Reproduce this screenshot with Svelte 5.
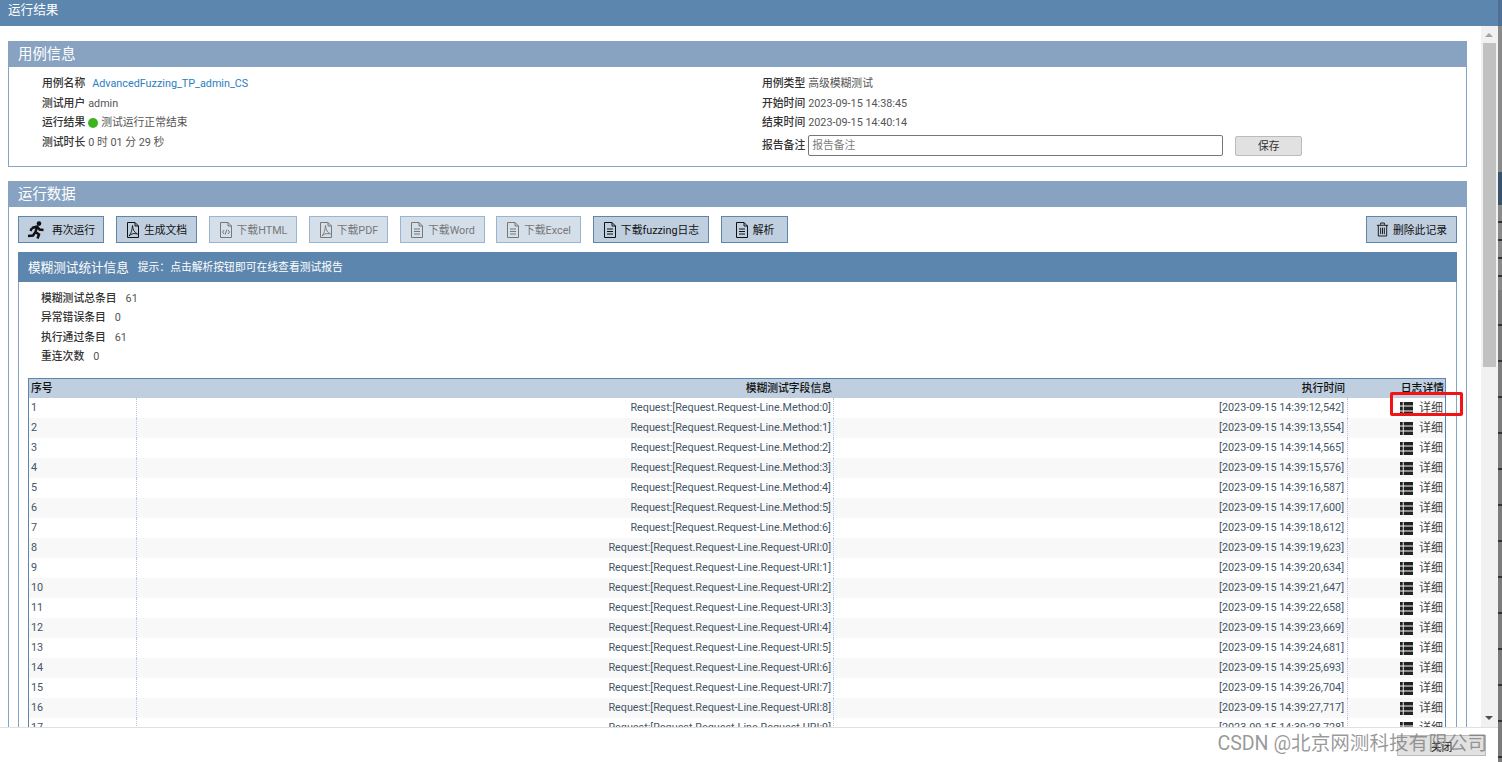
<script>
  const caseName = 'AdvancedFuzzing_TP_admin_CS';
  const times = ['12,542', '13,554', '14,565', '15,576', '16,587', '17,600', '18,612', '19,623', '20,634', '21,647', '22,658', '23,669', '24,681', '25,693', '26,704', '27,717', '28,728'];
  const rows = times.map((t, i) => ({
    no: i + 1,
    field: i < 7 ? `Request:[Request.Request-Line.Method:${i}]` : `Request:[Request.Request-Line.Request-URI:${i - 7}]`,
    time: `[2023-09-15 14:39:${t}]`
  }));

  const buttons = [
    { label: '再次运行', icon: 'run', width: 86 },
    { label: '生成文档', icon: 'pdf', width: 81 },
    { label: '下载HTML', icon: 'code', width: 88, off: true },
    { label: '下载PDF', icon: 'pdf', width: 79, off: true },
    { label: '下载Word', icon: 'doc', width: 85, off: true, tight: true },
    { label: '下载Excel', icon: 'doc', width: 85, off: true },
    { label: '下载fuzzing日志', icon: 'doc', width: 116 },
    { label: '解析', icon: 'doc', width: 67 }
  ];

  const stats = [
    ['模糊测试总条目', '61'],
    ['异常错误条目', '0'],
    ['执行通过条目', '61'],
    ['重连次数', '0']
  ];
</script>

{#snippet icon(kind)}
  {#if kind === 'run'}
    <svg class="ico run" viewBox="0 0 18 18" width="18" height="18">
      <circle cx="12" cy="2.600" r="2.300" fill="#111" />
      <path d="M5 7 L10 5.500 L12.500 8.500 L16.500 9 M10 5.500 L8.500 11 L12 13.500 L10.500 17.500 M8.500 11 L6 14.500 L1 15 M5 7 L3.500 10" fill="none" stroke="#111" stroke-width="2.500" />
    </svg>
  {:else}
    <svg class="ico" viewBox="0 0 14 16" width="14" height="16">
      <path d="M1.500 .5 H9 L12.500 4 V15.500 H1.500 Z M9 .5 V4 H12.500" fill="none" stroke="currentColor" />
      {#if kind === 'doc'}
        <path d="M4 7 H10 M4 9.500 H10 M4 12 H10" stroke="currentColor" />
      {:else if kind === 'pdf'}
        <path d="M6.500 3.500 C7 8 8 10 11.500 12 C8 11 5.500 11.500 3 14 C5.500 11 6 8 6.500 3.500 Z" fill="none" stroke="currentColor" stroke-width=".9" />
      {:else}
        <path d="M5 8 L3.500 10 L5 12 M9 8 L10.500 10 L9 12 M7.800 7.500 L6.200 12.500" fill="none" stroke="currentColor" />
      {/if}
    </svg>
  {/if}
{/snippet}

<div class="page">
  <div class="dialog">
    <div class="title">运行结果</div>

    <div class="middle">
      <div class="scroll">
        <section class="panel info">
          <h3>用例信息</h3>
          <div class="info-body">
            <div class="info-col left">
              <div><b>用例名称</b> <a href="#case" class="case">{caseName}</a></div>
              <div><b>测试用户</b> admin</div>
              <div class="result"><b>运行结果</b> <i class="dot"></i> 测试运行正常结束</div>
              <div><b>测试时长</b> 0 时 01 分 29 秒</div>
            </div>
            <div class="info-col right">
              <div><b>用例类型</b> 高级模糊测试</div>
              <div><b>开始时间</b> 2023-09-15 14:38:45</div>
              <div><b>结束时间</b> 2023-09-15 14:40:14</div>
              <div class="note">
                <b>报告备注</b>
                <input placeholder="报告备注" />
                <button class="save">保存</button>
              </div>
            </div>
          </div>
        </section>

        <section class="panel data">
          <h3>运行数据</h3>
          <div class="data-body">
            <div class="toolbar">
              {#each buttons as b}
                <button class="tool" class:off={b.off} class:tight={b.tight} style="width:{b.width}px">
                  {@render icon(b.icon)}
                  <span>{b.label}</span>
                </button>
              {/each}
              <button class="tool del">
                <svg class="ico" viewBox="0 0 14 16" width="13" height="15">
                  <path d="M1 3.500 H13 M5 3 V1 H9 V3 M2.500 3.500 V15 H11.500 V3.500 M5 6 V13 M7 6 V13 M9 6 V13" fill="none" stroke="currentColor" />
                </svg>
                <span>删除此记录</span>
              </button>
            </div>

            <div class="fuzz">
              <div class="fuzz-head">
                <strong>模糊测试统计信息</strong>
                <span>提示：点击解析按钮即可在线查看测试报告</span>
              </div>
              <div class="stats">
                {#each stats as s}
                  <div><b>{s[0]}</b><em>{s[1]}</em></div>
                {/each}
              </div>
              <div class="table">
                <div class="row head">
                  <div class="c1">序号</div>
                  <div class="c2">模糊测试字段信息</div>
                  <div class="c3">执行时间</div>
                  <div class="c4">日志详情</div>
                </div>
                {#each rows as r}
                  <div class="row">
                    <div class="c1">{r.no}</div>
                    <div class="c2">{r.field}</div>
                    <div class="c3">{r.time}</div>
                    <div class="c4">
                      <svg viewBox="0 0 14 13" width="13" height="13" preserveAspectRatio="none" fill="#222">
                        <path d="M0 0 H3 V3.500 H0 Z M4 0 H14 V3.500 H4 Z M0 4.500 H3 V8.500 H0 Z M4 4.500 H14 V8.500 H4 Z M0 9.500 H3 V13 H0 Z M4 9.500 H14 V13 H4 Z" />
                      </svg>
                      <span>详细</span>
                    </div>
                  </div>
                {/each}
              </div>
            </div>
          </div>
        </section>
      </div>

      <div class="scrollbar">
        <span class="up"></span>
        <div class="thumb"></div>
        <span class="down"></span>
      </div>
    </div>

    <div class="bottom">
      <button class="close">关闭</button>
    </div>
  </div>

  <div class="sliver">
    <div class="s0"></div>
    <div class="s1"></div>
    <div class="s2"></div>
    <div class="s3"></div>
    <div class="s4"></div>
  </div>

  <div class="redbox"></div>
  <div class="mark">CSDN @北京网测科技有限公司</div>
</div>

<style>
  :global(body) {
    margin: 0;
    background: #fff;
  }

  .page {
    position: relative;
    display: flex;
    width: 1502px;
    height: 762px;
    overflow: hidden;
    font-family: Roboto, "Noto Sans CJK SC", sans-serif;
    font-size: 10.8px;
    color: #555;
  }

  .dialog {
    display: flex;
    flex-direction: column;
    width: 1498px;
    height: 762px;
  }

  .title {
    flex: none;
    height: 26px;
    padding: 0 8px;
    background: #5d86ae;
    color: #fff;
    font-size: 12.6px;
    line-height: 19px;
  }

  .middle {
    display: flex;
    flex: none;
    height: 701px;
    overflow: hidden;
  }

  .scroll {
    box-sizing: border-box;
    width: 1481px;
    padding: 15px 14px 0 8px;
    overflow: hidden;
  }

  .panel {
    border: 1px solid #84a5c6;
    border-top: 0;
  }

  .panel h3 {
    margin: 0 -1px;
    height: 26px;
    padding-left: 10px;
    background: #87a3c1;
    color: #fff;
    font-size: 14.4px;
    font-weight: 400;
    line-height: 28px;
  }

  .info {
    height: 126px;
    box-sizing: border-box;
    margin-bottom: 14px;
  }

  .info-body {
    display: flex;
    padding: 7px 0 0 33px;
  }

  .info-col > div {
    display: flex;
    align-items: baseline;
    gap: 3px;
    height: 19.5px;
    line-height: 19.5px;
  }

  .left {
    width: 720px;
  }

  .info b,
  .stats b {
    font-weight: 500;
    color: #333;
  }

  .case {
    margin-left: 4px;
    color: #2a7ec2;
    text-decoration: none;
  }

  .info-col .result {
    align-items: center;
  }

  .dot {
    width: 10px;
    height: 10px;
    border-radius: 50%;
    background: #3cb41e;
  }

  .info-col .note {
    align-items: center;
    height: 24px;
    margin-top: 1px;
  }

  .note input {
    box-sizing: border-box;
    width: 415px;
    height: 21px;
    padding: 0 3px;
    border: 1px solid #767676;
    border-radius: 2px;
    font: inherit;
  }

  .note input::placeholder {
    color: #808080;
  }

  .save {
    width: 67px;
    height: 20px;
    margin-left: 9px;
    padding: 0;
    border: 1px solid #bbb;
    border-radius: 2px;
    background: #e1e1e1;
    color: #333;
    font: inherit;
  }

  .data-body {
    padding: 9px 9px 0;
  }

  .toolbar {
    display: flex;
    gap: 12px;
    height: 27px;
    margin-bottom: 9px;
  }

  .tool {
    display: flex;
    align-items: center;
    justify-content: center;
    gap: 4px;
    box-sizing: border-box;
    height: 27px;
    padding: 0 0 2px;
    border: 1px solid #5d86ae;
    background: #bfcfe0;
    color: #111;
    font: inherit;
  }

  .tool.off {
    border-color: #9ab5d2;
    background: #d5dfea;
    color: #777;
  }

  .tool.tight {
    margin-right: -1px;
  }

  .tool .run {
    margin-right: 3px;
  }

  .tool .ico {
    margin-top: 2px;
  }

  .del {
    width: 91px;
    margin-left: auto;
  }

  .fuzz {
    border: 1px solid #84a5c6;
    border-top: 0;
  }

  .fuzz-head {
    display: flex;
    align-items: center;
    gap: 9px;
    box-sizing: border-box;
    height: 30px;
    margin: 0 -1px;
    padding: 0 0 2px 10px;
    background: #5d86ae;
    color: #fff;
  }

  .fuzz-head strong {
    font-size: 12.6px;
    font-weight: 400;
  }

  .stats {
    padding: 6.5px 0 0 22px;
    height: 90px;
    box-sizing: border-box;
  }

  .stats div {
    display: flex;
    align-items: baseline;
    gap: 9px;
    height: 19.5px;
    line-height: 19.5px;
  }

  .stats em {
    font-style: normal;
  }

  .table {
    margin: 6px 10px 0 9px;
    border: 1px solid #5d86ae;
    border-bottom: 0;
  }

  .row {
    display: grid;
    grid-template-columns: 108px 697px 514px 1fr;
    height: 20px;
    line-height: 20px;
    color: #456;
    white-space: nowrap;
  }

  .row:nth-child(odd) {
    background: #f8f8f8;
  }

  .row.head {
    height: 19px;
    line-height: 19px;
    background: #bfcfe0;
    color: #111;
    font-weight: 500;
  }

  .row > div {
    box-sizing: border-box;
    padding: 0 2px;
    text-align: right;
    border-right: 1px dotted #b5cbe2;
  }

  .row > .c3 {
    padding-right: 3px;
  }

  .row.head > div {
    border-right: 0;
  }

  .row .c1 {
    text-align: left;
  }

  .row .c4 {
    display: flex;
    align-items: center;
    justify-content: flex-end;
    gap: 6px;
    border-right: 0;
    color: #444;
    font-size: 12px;
  }

  .row.head .c4 {
    padding-right: 1px;
    color: #111;
    font-size: 10.8px;
  }

  .scrollbar {
    position: relative;
    width: 17px;
    background: #f1f1f1;
  }

  .thumb {
    position: absolute;
    left: 2px;
    top: 17px;
    width: 13px;
    height: 324px;
    background: #c1c1c1;
  }

  .up,
  .down {
    position: absolute;
    left: 4px;
    border: 4px solid transparent;
    border-left-width: 4.5px;
    border-right-width: 4.5px;
  }

  .up {
    top: 3px;
    border-bottom-color: #a3a3a3;
  }

  .down {
    bottom: 3px;
    border-top-color: #505050;
  }

  .bottom {
    display: flex;
    flex: none;
    justify-content: flex-end;
    box-sizing: border-box;
    height: 35px;
    padding: 7px 12px 0 0;
    border-top: 1px solid #e0e0e0;
    background: #fff;
  }

  .close {
    width: 89px;
    height: 21px;
    padding: 0;
    border: 1px solid #bbb;
    background: #e1e1e1;
    color: #222;
    font: inherit;
  }

  .sliver {
    display: flex;
    flex-direction: column;
    width: 4px;
    background: #808080;
  }

  .s0 {
    height: 26px;
    background: #4f7096;
  }

  .s1 {
    height: 146px;
    background: #8a8a8a;
  }

  .s2 {
    height: 33px;
    background: #37536e;
  }

  .s3 {
    height: 85px;
    background: repeating-linear-gradient(#8a8a8a 0 16px, #333 16px 18px);
  }

  .s4 {
    flex: 1;
    background: repeating-linear-gradient(#7c7c7c 0 34px, #333 34px 36px);
  }

  .redbox {
    position: absolute;
    left: 1390px;
    top: 392px;
    width: 67px;
    height: 18px;
    border: 3px solid #f01414;
    border-radius: 2px;
  }

  .mark {
    position: absolute;
    right: 15px;
    top: 732px;
    color: rgba(120, 120, 120, .75);
    font-size: 19.6px;
    line-height: 24px;
    white-space: nowrap;
  }
</style>
